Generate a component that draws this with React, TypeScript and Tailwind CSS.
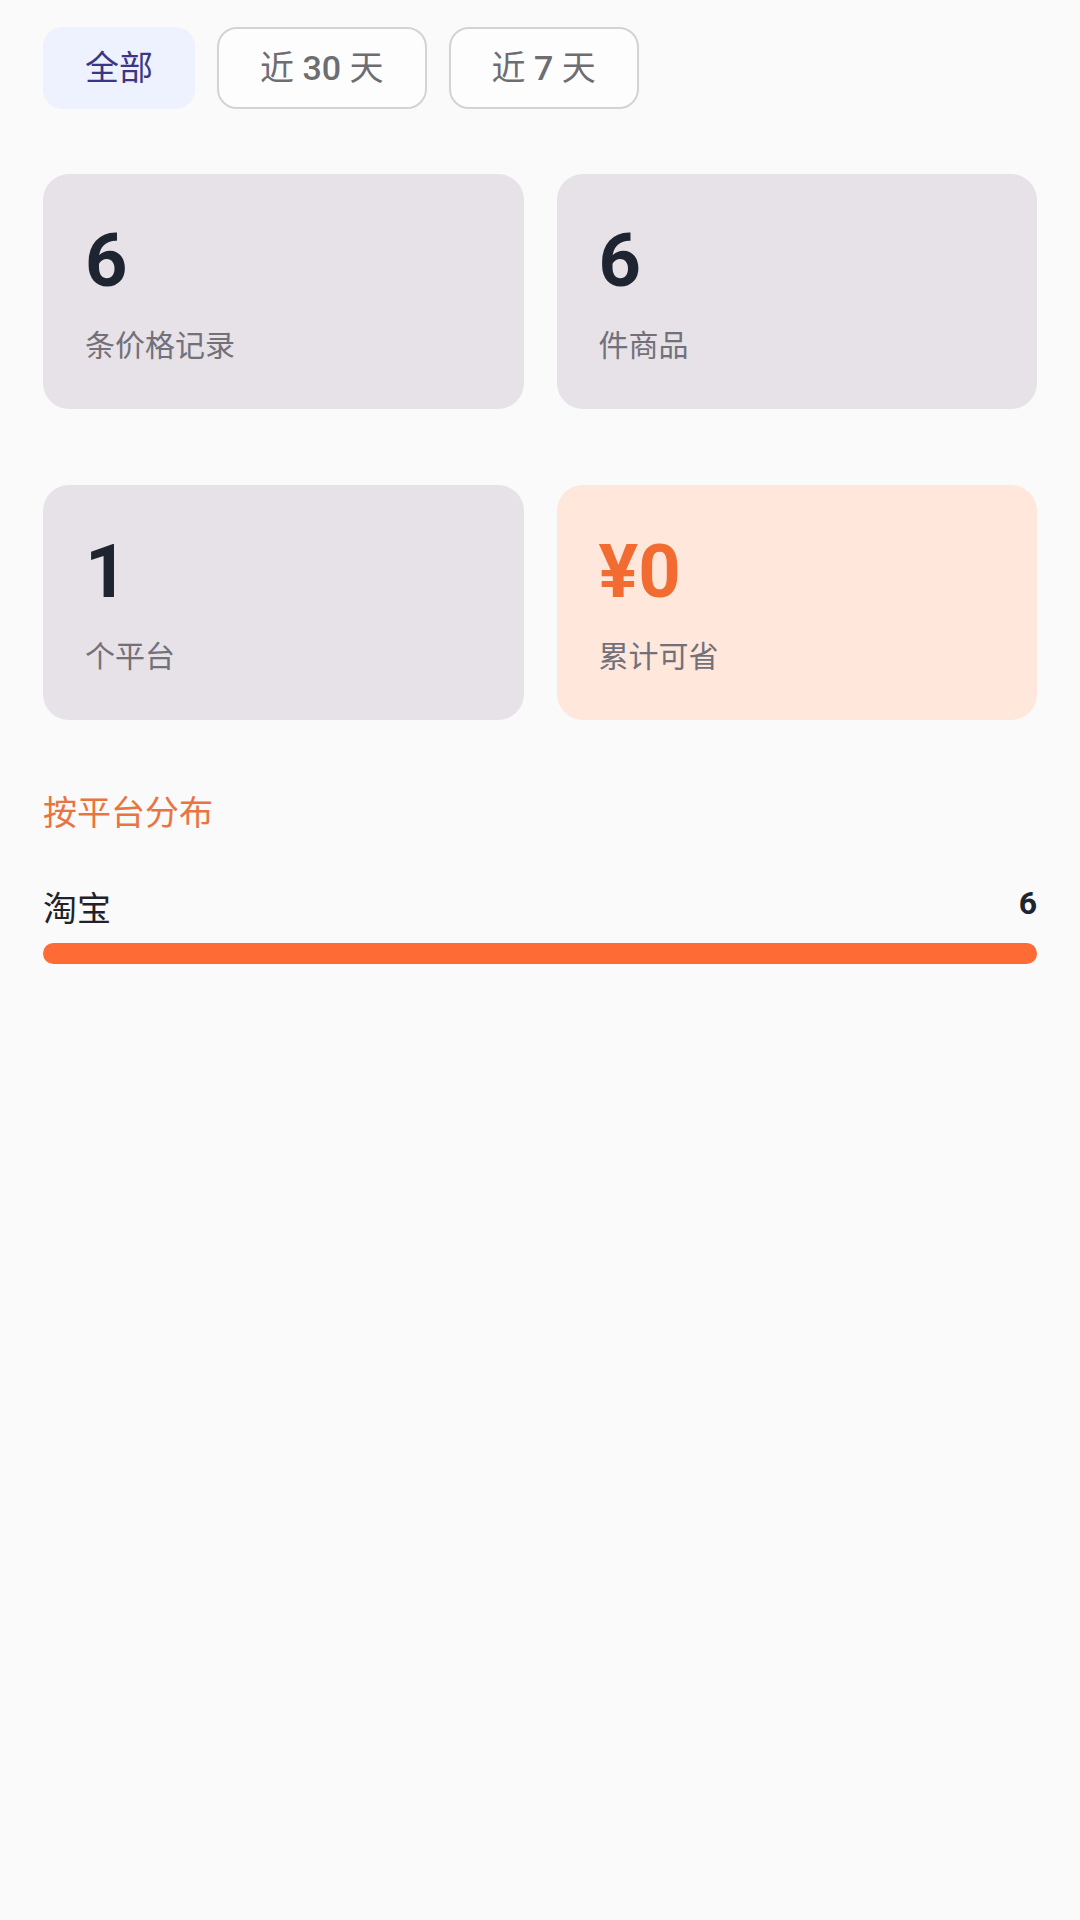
import React from "react";

const font = { fontFamily: 'Roboto, "Noto Sans CJK SC", "Noto Sans", sans-serif' };

type Stat = { value: string; label: string; accent?: boolean };

const stats: Stat[] = [
  { value: "6", label: "条价格记录" },
  { value: "6", label: "件商品" },
  { value: "1", label: "个平台" },
  { value: "¥0", label: "累计可省", accent: true },
];

const StatCard = ({ stat }: { stat: Stat }) => (
  <div
    className={
      "h-[235px] rounded-[26px] pt-[50px] px-[42px] " +
      (stat.accent ? "bg-[#ffe7dc]" : "bg-[#e6e2e8]")
    }
  >
    <div
      className={
        "text-[74px] leading-[74px] font-bold " +
        (stat.accent ? "text-[#f26b30]" : "text-[#1e2530]")
      }
    >
      {stat.value}
    </div>
    <div className="mt-[30px] text-[30px] leading-[36px] text-[#72717a]">
      {stat.label}
    </div>
  </div>
);

const App = () => {
  const platforms = [{ name: "淘宝", count: 6 }];
  const max = 6;

  return (
    <div className="min-h-[1920px] w-[1080px] bg-[#fafafb] px-[43px] pt-[27px]" style={font}>
      {/* range filter */}
      <div className="flex gap-[22px]">
        <button className="h-[82px] px-[42px] rounded-[20px] bg-[#eef1fe] text-[34px] text-[#3a3688]">
          全部
        </button>
        <button className="h-[82px] px-[41px] rounded-[20px] border-[2.5px] border-[#d3d3d5] bg-[#fdfdfd] text-[34px] text-[#6d6d72]">
          近 <span className="font-medium">30</span> 天
        </button>
        <button className="h-[82px] px-[41px] rounded-[20px] border-[2.5px] border-[#d3d3d5] bg-[#fdfdfd] text-[34px] text-[#6d6d72]">
          近 <span className="font-medium">7</span> 天
        </button>
      </div>

      <div className="mt-[65px] grid grid-cols-2 gap-x-[33px] gap-y-[76px]">
        {stats.map((s, i) => (
          <StatCard key={i} stat={s} />
        ))}
      </div>

      <div className="mt-[70px] text-[34px] leading-[46px] text-[#ea7440]">按平台分布</div>

      <div className="mt-[50px] flex flex-col gap-6">
        {platforms.map((p) => (
          <div key={p.name}>
            <div className="flex items-center justify-between h-[46px]">
              <span className="text-[34px] text-[#1f2228]">{p.name}</span>
              <span className="mb-[12px] text-[32px] font-bold text-[#1e2530]">{p.count}</span>
            </div>
            <div className="mt-[11px] h-[21px] rounded-full bg-[#fde3d6]">
              <div
                className="h-full rounded-full bg-[#ff6b35]"
                style={{ width: `${(p.count / max) * 100}%` }}
              />
            </div>
          </div>
        ))}
      </div>
    </div>
  );
};

export default App;
